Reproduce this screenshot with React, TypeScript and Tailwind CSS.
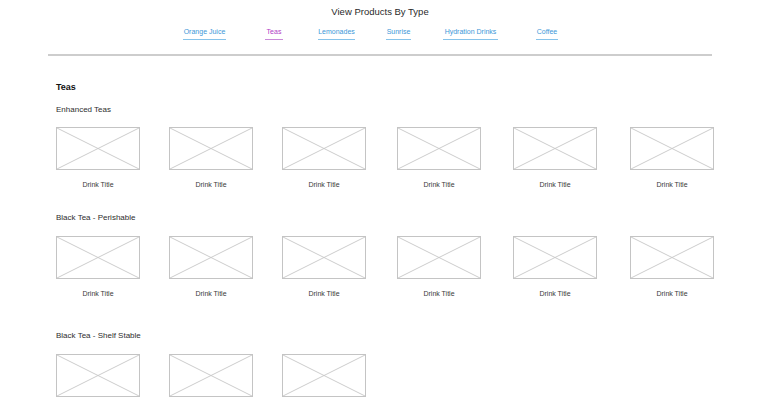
const links = [
  { label: "Orange Juice", cls: "ml-[183px] w-[43px]", active: false },
  { label: "Teas", cls: "ml-[39px] w-[18px]", active: true },
  { label: "Lemonades", cls: "ml-[35px] w-[37px]", active: false },
  { label: "Sunrise", cls: "ml-[31px] w-[25px]", active: false },
  { label: "Hydration Drinks", cls: "ml-[32px] w-[55px]", active: false },
  { label: "Coffee", cls: "ml-[38px] w-[22px]", active: false },
];

const sections = [
  { title: "Enhanced Teas", count: 6, mt: "mt-[12px]", gap: "mt-[12px]" },
  { title: "Black Tea - Perishable", count: 6, mt: "mt-[24px]", gap: "mt-[13px]" },
  { title: "Black Tea - Shelf Stable", count: 3, mt: "mt-[33px]", gap: "mt-[13px]" },
];

function Placeholder() {
  return (
    <div className="h-[43px] w-[84px] border border-[#c4c4c4] bg-white">
      <svg className="block h-full w-full" viewBox="0 0 84 43" preserveAspectRatio="none">
        <line x1="0" y1="0" x2="84" y2="43" stroke="#c4c4c4" strokeWidth="0.9" />
        <line x1="84" y1="0" x2="0" y2="43" stroke="#c4c4c4" strokeWidth="0.9" />
      </svg>
    </div>
  );
}

function DrinkCard() {
  return (
    <div className="flex w-[84px] flex-col items-center">
      <Placeholder />
      <span className="mt-[10px] text-[7px] leading-[9px] text-[#3a3a3a]">Drink Title</span>
    </div>
  );
}

export default function App() {
  return (
    <main className="min-h-[400px] w-[760px] overflow-hidden bg-white font-['Liberation_Sans',Arial,sans-serif] text-[#222]">
      <header className="pt-[6px]">
        <h1 className="text-center text-[9.5px] leading-[12px] text-[#2a2a2a]">View Products By Type</h1>
        <nav className="mt-[9px] flex">
          {links.map((link) => (
            <a
              key={link.label}
              href="#"
              className={`${link.cls} whitespace-nowrap border-b pb-[3px] text-center text-[7px] leading-[9px] ${
                link.active ? "border-[#c98ad8] text-[#b040c6]" : "border-[#86c3ea] text-[#3d97d8]"
              }`}
            >
              {link.label}
            </a>
          ))}
        </nav>
        <div className="mx-[48px] mt-[14px] h-[1.5px] bg-[#cdcdcd]" />
      </header>

      <section className="pl-[56px] pt-[26px]">
        <h2 className="text-[9px] font-bold leading-[11px] text-[#111]">Teas</h2>
        {sections.map((section) => (
          <div key={section.title} className={section.mt}>
            <h3 className="text-[8px] leading-[10px] text-[#2e2e2e]">{section.title}</h3>
            <div className={`${section.gap} grid grid-cols-[113px_113px_115px_116px_117px_84px]`}>
              {Array.from({ length: section.count }).map((_, i) => (
                <DrinkCard key={i} />
              ))}
            </div>
          </div>
        ))}
      </section>
    </main>
  );
}
